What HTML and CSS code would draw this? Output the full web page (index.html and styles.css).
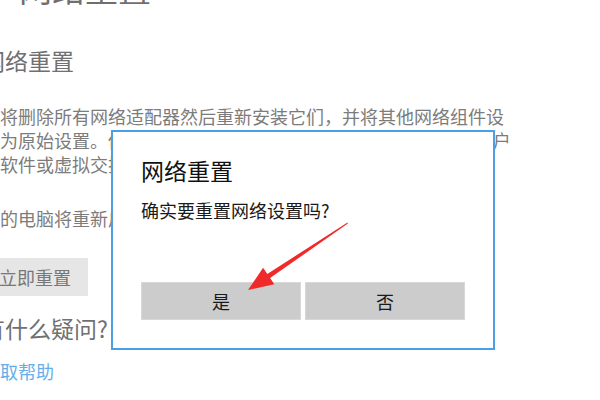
FILE: index.html
```html
<!DOCTYPE html>
<html lang="zh-CN">
<head>
<meta charset="utf-8">
<title>网络重置</title>
<link rel="stylesheet" href="styles.css">
</head>
<body>
<main class="page">
  <h1 class="page-title">网络重置</h1>
  <h2 class="section-title">网络重置</h2>
  <p class="desc desc-main">这将删除所有网络适配器然后重新安装它们，并将其他网络组件设<br>置为原始设置。你可能需要重新安装其他网络软件，例如 VPN 客户<br>端软件或虚拟交换机。</p>
  <p class="desc desc-restart">你的电脑将重新启动。</p>
  <button class="reset-btn" type="button">立即重置</button>
  <h2 class="section-title help-title">有什么疑问?</h2>
  <a class="help-link" href="#">获取帮助</a>
</main>

<div class="dialog" role="dialog">
  <div class="dialog-title">网络重置</div>
  <div class="dialog-text">确实要重置网络设置吗?</div>
  <div class="dialog-actions">
    <button class="dialog-btn" type="button">是</button>
    <button class="dialog-btn" type="button">否</button>
  </div>
</div>

<svg class="annotation" width="600" height="400" viewBox="0 0 600 400">
  <polygon points="347.5,222.6 267.3,273.9 263.1,267.7 248,290 274.3,284.3 270.1,278.1 347.9,223.4" fill="#f02a2a"/>
</svg>
</body>
</html>
```
FILE: styles.css
```css
html, body {
  margin: 0;
  padding: 0;
  background: #ffffff;
  width: 600px;
  height: 400px;
  overflow: hidden;
}

body {
  position: relative;
  font-family: "Noto Sans CJK SC", "Liberation Sans", sans-serif;
  color: #777777;
}

.page {
  display: flex;
  flex-direction: column;
  align-items: flex-start;
  margin-left: -18px;
}

.page-title {
  margin: -32px 0 0 37px;
  font-size: 33px;
  line-height: 40px;
  font-weight: 400;
  color: #6f6f6f;
}

.section-title {
  margin: 37px 0 0 0;
  font-size: 23px;
  line-height: 30px;
  font-weight: 400;
  color: #707070;
}

.desc {
  margin: 0;
  font-size: 18px;
  line-height: 24px;
  color: #7c7c7c;
  white-space: nowrap;
}

.desc-main {
  margin-top: 29px;
}

.desc-restart {
  margin-top: 30px;
}

.reset-btn {
  margin-top: 28px;
  height: 38px;
  padding: 0 17px;
  border: none;
  background: #e6e6e6;
  font-family: inherit;
  font-size: 18px;
  line-height: 38px;
  color: #777777;
}

.help-title {
  margin-top: 17px;
}

.help-link {
  margin-top: 16px;
  font-size: 18px;
  line-height: 24px;
  color: #66aeea;
  text-decoration: none;
}

.dialog {
  position: absolute;
  left: 111px;
  top: 130px;
  width: 384px;
  height: 220px;
  box-sizing: border-box;
  border: 2px solid #4c9fe6;
  background: #ffffff;
  padding: 23px 28px 28px 28px;
  display: flex;
  flex-direction: column;
}

.dialog-title {
  font-size: 23px;
  line-height: 30px;
  color: #111111;
}

.dialog-text {
  margin-top: 13px;
  font-size: 18px;
  line-height: 24px;
  color: #1a1a1a;
}

.dialog-actions {
  margin-top: auto;
  display: flex;
  gap: 4px;
}

.dialog-btn {
  flex: 1;
  height: 38px;
  box-sizing: border-box;
  border: 1px solid #d8d8d8;
  background: #cccccc;
  font-family: inherit;
  font-size: 18px;
  color: #1a1a1a;
  padding: 0;
}

.annotation {
  position: absolute;
  left: 0;
  top: 0;
  pointer-events: none;
}
```
